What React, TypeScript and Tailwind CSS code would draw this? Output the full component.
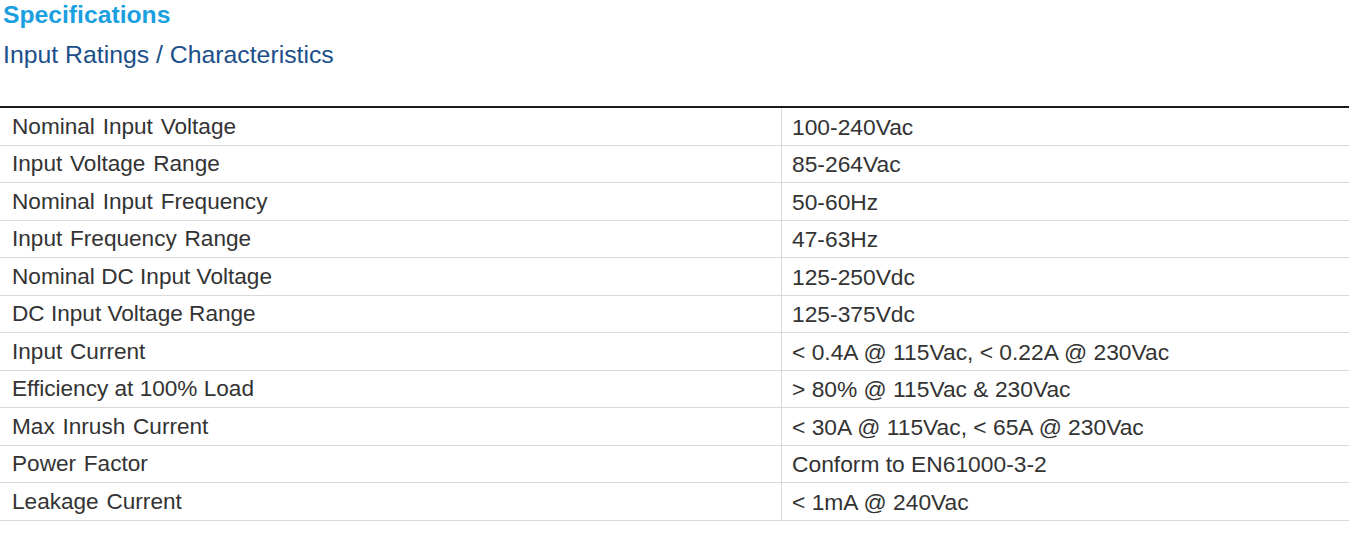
import React from 'react';

type Spec = { label: string; value: string; wide?: boolean };

const specs: Spec[] = [
  { label: 'Nominal Input Voltage', value: '100-240Vac', wide: true },
  { label: 'Input Voltage Range', value: '85-264Vac', wide: true },
  { label: 'Nominal Input Frequency', value: '50-60Hz', wide: true },
  { label: 'Input Frequency Range', value: '47-63Hz', wide: true },
  { label: 'Nominal DC Input Voltage', value: '125-250Vdc' },
  { label: 'DC Input Voltage Range', value: '125-375Vdc' },
  { label: 'Input Current', value: '< 0.4A @ 115Vac, < 0.22A @ 230Vac', wide: true },
  { label: 'Efficiency at 100% Load', value: '> 80% @ 115Vac & 230Vac' },
  { label: 'Max Inrush Current', value: '< 30A @ 115Vac, < 65A @ 230Vac', wide: true },
  { label: 'Power Factor', value: 'Conform to EN61000-3-2', wide: true },
  { label: 'Leakage Current', value: '< 1mA @ 240Vac', wide: true },
];

const App: React.FC = () => {
  return (
    <div className="w-[1352px] h-[533px] bg-white font-['Liberation_Sans',Arial,sans-serif] overflow-hidden">
      <h2 className="pl-[3px] text-[24.7px] leading-[30px] font-bold text-[#1a9fe0]">Specifications</h2>
      <h3 className="pl-[3px] mt-[10px] text-[24.8px] leading-[30px] text-[#1b4f8a]">Input Ratings / Characteristics</h3>

      <div className="mt-[36px] w-[1349px] border-t-2 border-[#1a1a1a]">
        {specs.map((s) => (
          <div key={s.label} className="flex h-[37.5px] border-b border-[#d9d9d9] text-[#333333]">
            {/* label column */}
            <div
              className={`w-[782px] shrink-0 flex items-center pl-3 pt-[1px] text-[22.6px] border-r border-[#d9d9d9] ${s.wide ? '[word-spacing:1.5px]' : ''}`}
            >
              {s.label}
            </div>
            <div className="flex-1 flex items-center pl-[10px] pt-[1px] text-[22.8px]">{s.value}</div>
          </div>
        ))}
      </div>
    </div>
  );
};

export default App;
